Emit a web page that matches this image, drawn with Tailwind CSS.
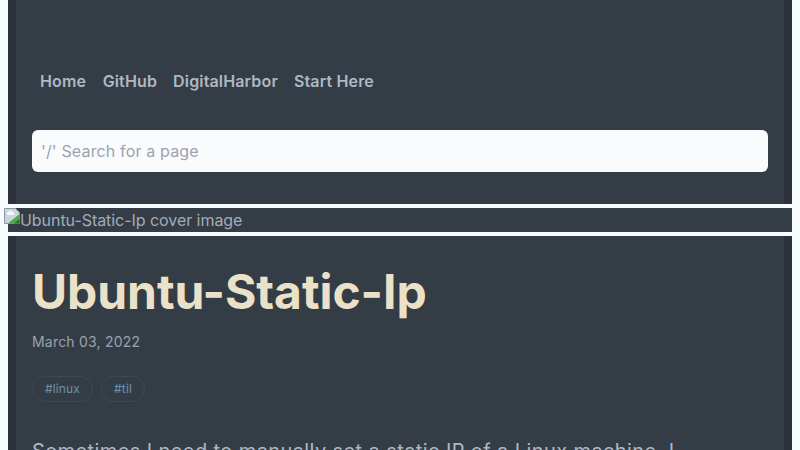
<!DOCTYPE html>
<html lang="en">
<head>
  <meta charset="UTF-8" />
  <title>Ubuntu-Static-Ip</title>
  <script src="https://cdn.jsdelivr.net/npm/@tailwindcss/browser@4"></script>
</head>
<body class="h-[450px] overflow-hidden bg-[#f8fcff] font-['Inter',sans-serif]">
  <!-- header -->
  <header class="mx-2 h-[204px] border-x-8 border-[#2b323b] bg-[#343d46] px-4">
    <nav class="flex gap-4 px-2 pt-[71px] text-base leading-5 font-semibold tracking-[0.15px] text-[#aeb8c3]">
      <a href="#">Home</a>
      <a href="#" class="ml-[0.5px]">GitHub</a>
      <a href="#">DigitalHarbor</a>
      <a href="#">Start Here</a>
    </nav>
    <div class="mt-[39px] flex h-[42px] items-center rounded-md bg-[#f9fbfd] px-[9px] text-base tracking-[0.15px] text-[#9ca3af]">'/' Search for a page</div>
  </header>

  <!-- cover image that failed to load -->
  <div class="relative mx-2 mt-1 flex h-6 items-center bg-[#343d46] pl-3 text-base tracking-[-0.05px] text-[#a3acb6]">
    <svg class="absolute top-0 -left-1 h-4 w-4" viewBox="0 0 16 16">
      <path d="M0.5 0.5H11.5L15.5 4.5V15.5H0.5Z" fill="#c9d6e2" stroke="#8f979f" />
      <path d="M3 4.5Q6 1.5 9 4Q11 5 10 7H3Z" fill="#f4f7fa" />
      <path d="M4 15.5L15.5 6V15.5Z" fill="#57a545" />
      <path d="M10 15.5L15.5 11V15.5Z" fill="#2f6e2a" />
    </svg>
    <span>Ubuntu-Static-Ip cover image</span>
  </div>

  <!-- article -->
  <main class="mx-2 mt-1 h-[300px] overflow-hidden border-x-8 border-[#2b323b] bg-[#343d46] px-4">
    <h1 class="pt-[26px] text-5xl leading-[60px] font-bold tracking-[-0.05px] text-[#ebe0c8]">Ubuntu-Static-Ip</h1>
    <p class="mt-[10px] text-sm leading-5 tracking-[0.2px] text-[#98a2ad]">March 03, 2022</p>
    <div class="mt-[24px] flex gap-2">
      <a href="#" class="flex h-[26px] items-center rounded-full border border-[#3f4853] px-3 text-xs tracking-[0.15px] text-[#6e93a8]">#linux</a>
      <a href="#" class="flex h-[26px] items-center rounded-full border border-[#3f4853] px-3 text-xs tracking-[0.15px] text-[#6e93a8]">#til</a>
    </div>
    <p class="mt-[33px] text-xl leading-8 tracking-[0.4px] text-[#aeb8c3]">Sometimes I need to manually set a static IP of a Linux machine. I</p>
  </main>
</body>
</html>
